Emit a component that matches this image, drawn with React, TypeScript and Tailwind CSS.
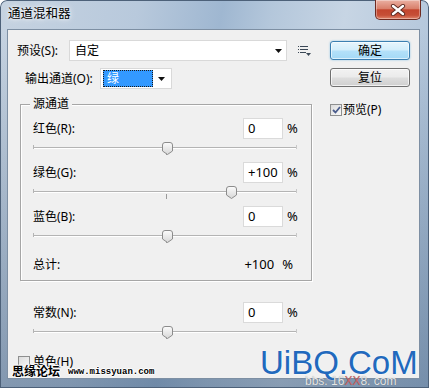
import React from "react";

function Thumb() {
  return (
    <svg width="11" height="13" viewBox="0 0 11 13">
      <defs>
        <linearGradient id="thumbg" x1="0" y1="0" x2="0" y2="1">
          <stop offset="0" stopColor="#fcfcfc" />
          <stop offset="1" stopColor="#d6d6d6" />
        </linearGradient>
      </defs>
      <path
        d="M0.5 3 Q0.5 0.5 3 0.5 H8 Q10.5 0.5 10.5 3 V9 L5.5 12.5 L0.5 9 Z"
        fill="url(#thumbg)"
        stroke="#8c8c8c"
      />
    </svg>
  );
}

function Slider({ thumb }: { thumb: string }) {
  return (
    <div className="relative h-[14px] w-[265px]">
      <div className="absolute left-0 right-[1px] top-[6px] h-px bg-[#b4b4b4]" />
      <div className="absolute left-0 right-[1px] top-[7px] h-px bg-white" />
      <div className="absolute left-0 top-[4px] h-[4px] w-px bg-[#b4b4b4]" />
      <div className="absolute right-[1px] top-[4px] h-[4px] w-px bg-[#c8c8c8]" />
      <div className="absolute left-[133px] top-[9px] h-[5px] w-px bg-[#9a9a9a]" />
      <div className={`absolute top-[1px] ${thumb}`}>
        <Thumb />
      </div>
    </div>
  );
}

function ValueRow({ label, value }: { label: string; value: string }) {
  return (
    <div className="flex h-[21px] items-center justify-between">
      <span>{label}</span>
      <div className="flex items-center">
        <div className="h-[21px] w-[40px] border border-[#dadada] bg-white pl-[4px] text-[13px] leading-[19px]">
          {value}
        </div>
        <span className="ml-[4px] w-[11px] text-[13px]">%</span>
      </div>
    </div>
  );
}

function DownArrow() {
  return (
    <svg width="7" height="4" viewBox="0 0 7 4">
      <path d="M0 0 H7 L3.5 4 Z" fill="#111" />
    </svg>
  );
}

function MenuIcon() {
  return (
    <svg width="13" height="10" viewBox="0 0 13 10" className="ml-[11px]">
      <rect x="0" y="0" width="1" height="1" fill="#3b4856" />
      <rect x="0" y="3" width="1" height="1" fill="#3b4856" />
      <rect x="0" y="6" width="1" height="1" fill="#3b4856" />
      <rect x="2" y="0" width="8" height="1" fill="#3b4856" />
      <rect x="2" y="3" width="8" height="1" fill="#3b4856" />
      <rect x="2" y="6" width="6" height="1" fill="#3b4856" />
      <path d="M8 7 H13 L10.5 10 Z" fill="#3b4856" />
    </svg>
  );
}

function CheckBox({ checked }: { checked?: boolean }) {
  return (
    <div className="flex h-[12px] w-[12px] items-center justify-center border border-[#8e8f8f] bg-[linear-gradient(135deg,#dcdcdc,#f8f8f8)]">
      {checked ? (
        <svg width="9" height="8" viewBox="0 0 9 8">
          <path d="M1 4 L3.5 6.5 L8 1" fill="none" stroke="#4a5c8c" strokeWidth="1.8" />
        </svg>
      ) : null}
    </div>
  );
}

export default function App() {
  return (
    <div className="relative h-[388px] w-[429px] overflow-hidden font-['Noto_Sans','Noto_Sans_CJK_SC',sans-serif] text-[12px] text-black">
      <div className="flex h-full w-full flex-col rounded-t-[7px] bg-[linear-gradient(to_bottom,rgba(0,0,0,0)_8%,rgba(40,70,105,0.4)),linear-gradient(100deg,#c6d3e1_0%,#b8c9dc_28%,#9fb7d1_45%,#b4c7db_55%,#c7d5e4_70%,#a8bed6_100%)] shadow-[inset_0_0_0_1px_#4d6179]">
        {/* title bar */}
        <div className="flex h-[29px] items-start justify-between">
          <span className="pl-[8px] pt-[5px] text-[12.5px] leading-[18px] [text-shadow:0_0_6px_rgba(255,255,255,0.95),0_0_3px_rgba(255,255,255,0.9)]">
            通道混和器
          </span>
          <div className="mr-[8px] flex h-[20px] w-[46px] items-center justify-center rounded-b-[5px] border border-t-0 border-[#6e2a20] bg-[linear-gradient(to_bottom,#eab0a2_0%,#d9806b_45%,#c3452e_52%,#c64f37_80%,#e0856c_100%)] shadow-[inset_0_0_0_1px_rgba(255,255,255,0.35)]">
            <svg width="16" height="12" viewBox="0 0 16 12">
              <path d="M3 2 L13 10 M13 2 L3 10" stroke="#5b2a22" strokeWidth="4.2" strokeLinecap="round" />
              <path d="M3 2 L13 10 M13 2 L3 10" stroke="#ffffff" strokeWidth="2.4" strokeLinecap="round" />
            </svg>
          </div>
        </div>
        {/* body */}
        <div className="pb-[9px] pl-[7px] pr-[9px]">
          <div className="flex h-[350px] border border-[#7d8fa3] bg-[#f0f0f0]">
            {/* left column */}
            <div className="flex w-[313px] flex-col">
              <div className="mt-[10px] flex h-[21px] items-center">
                <span className="w-[61px] pl-[9px]">预设(S):</span>
                <div className="flex h-[21px] w-[218px] items-center justify-between border border-[#d9d9d9] bg-white pl-[5px] pr-[4px]">
                  <span>自定</span>
                  <DownArrow />
                </div>
                <MenuIcon />
              </div>
              <div className="mt-[7px] flex h-[21px] items-center">
                <span className="w-[92px] pl-[17px]">输出通道(O):</span>
                <div className="flex h-[21px] w-[72px] items-center border border-[#d9d9d9] bg-white px-[2px]">
                  <div className="flex h-[17px] w-[50px] items-center border border-dotted border-[#1a1a1a] bg-[#3399ff] pl-[3px] text-white">
                    绿
                  </div>
                  <div className="flex flex-1 justify-center">
                    <DownArrow />
                  </div>
                </div>
              </div>
              {/* group box */}
              <div className="relative ml-[12px] mt-[15px] h-[177px] w-[292px] border border-[#a6a6a6] pl-[12px] pr-[13px] pt-[13px] shadow-[inset_1px_1px_0_#ffffff,1px_1px_0_#ffffff]">
                <span className="absolute -top-[9px] left-[9px] bg-[#f0f0f0] px-[3px] leading-[16px]">
                  源通道
                </span>
                <ValueRow label="红色(R):" value="0" />
                <div className="mt-[2px]">
                  <Slider thumb="left-[129px]" />
                </div>
                <div className="mt-[7px]">
                  <ValueRow label="绿色(G):" value="+100" />
                </div>
                <div className="mt-[2px]">
                  <Slider thumb="left-[193px]" />
                </div>
                <div className="mt-[7px]">
                  <ValueRow label="蓝色(B):" value="0" />
                </div>
                <div className="mt-[2px]">
                  <Slider thumb="left-[129px]" />
                </div>
                <div className="mt-[12px] flex h-[20px] items-center">
                  <span>总计:</span>
                  <span className="ml-auto text-[13px]">+100</span>
                  <span className="ml-[8px] mr-[5px] text-[13px]">%</span>
                </div>
              </div>
              <div className="ml-[25px] mt-[21px] w-[265px]">
                <ValueRow label="常数(N):" value="0" />
                <div className="mt-[2px]">
                  <Slider thumb="left-[129px]" />
                </div>
              </div>
              <div className="ml-[10px] mt-[16px] flex items-center">
                <CheckBox />
                <span className="ml-[3px] leading-[13px]">单色(H)</span>
              </div>
            </div>
            {/* right column */}
            <div className="ml-[9px] flex w-[80px] flex-col pt-[11px]">
              <div className="flex h-[19px] items-center justify-center rounded-[3px] border border-[#3c7fb1] bg-[linear-gradient(to_bottom,#e6f5fd_0%,#d4eefb_45%,#b3e0f9_55%,#a4d9f6_100%)] shadow-[inset_0_0_0_1px_rgba(255,255,255,0.6),0_0_2px_rgba(60,160,220,0.6)]">
                确定
              </div>
              <div className="mt-[8px] flex h-[19px] items-center justify-center rounded-[3px] border border-[#707070] bg-[linear-gradient(to_bottom,#f2f2f2_0%,#ebebeb_45%,#dddddd_55%,#cfcfcf_100%)] shadow-[inset_0_0_0_1px_rgba(255,255,255,0.7)]">
                复位
              </div>
              <div className="mt-[16px] flex items-center">
                <CheckBox checked />
                <span className="ml-[1px] leading-[13px]">预览(P)</span>
              </div>
            </div>
          </div>
        </div>
      </div>

      {/* watermarks */}
      <span className="absolute left-[12px] top-[365px] text-[12px] font-bold leading-[14px] text-black [text-shadow:1px_0_0_#fff,-1px_0_0_#fff,0_1px_0_#fff,0_-1px_0_#fff]">
        思缘论坛
      </span>
      <span className="absolute left-[68px] top-[367px] font-['Liberation_Mono',monospace] text-[9px] font-bold leading-[11px] text-black [text-shadow:1px_0_0_#fff,-1px_0_0_#fff,0_1px_0_#fff,0_-1px_0_#fff]">
        www.missyuan.com
      </span>
      <span className="absolute left-[260px] top-[350px] font-['Liberation_Sans',Arial,sans-serif] text-[33px] leading-[25px] text-[#2169bd] [text-shadow:0_0_2px_#fff]">
        UiBQ.CoM
      </span>
      <div className="absolute left-[305px] top-[375px] flex font-['Liberation_Sans',Arial,sans-serif] text-[12px] leading-[12px] text-[#e6e6e6] [text-shadow:0_0_1px_rgba(0,0,0,0.3)]">
        <span>bbs. 16</span>
        <span className="text-[#d06060]">XX</span>
        <span>8. com</span>
      </div>
    </div>
  );
}
